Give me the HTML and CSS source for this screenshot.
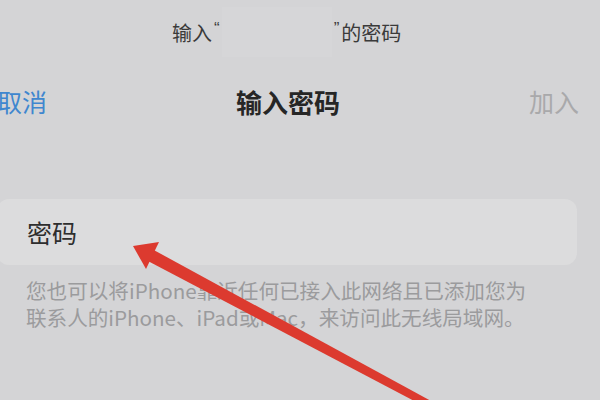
FILE: index.html
```html
<!DOCTYPE html>
<html lang="zh-CN">
<head>
<meta charset="utf-8">
<link rel="stylesheet" href="styles.css">
</head>
<body>
<div class="screen">
  <div class="top">
    <span>输入</span><span class="q">“</span><span class="blank"></span><span class="q">”</span><span>的密码</span>
  </div>
  <div class="nav">
    <span class="cancel">取消</span>
    <span class="title">输入密码</span>
    <span class="join">加入</span>
  </div>
  <div class="card">
    <span class="label">密码</span>
  </div>
  <p class="note">您也可以将iPhone靠近任何已接入此网络且已添加您为<br>联系人的iPhone、iPad或Mac，来访问此无线局域网。</p>
  <svg class="arrow" width="600" height="400" viewBox="0 0 600 400">
    <polygon points="145,259.5 151,248.5 443,407.5 439,414" fill="#dc3a2f"/>
    <polygon points="133,246 159,242 146,269" fill="#dc3a2f"/>
  </svg>
</div>
</body>
</html>
```
FILE: styles.css
```css
html, body {
  margin: 0;
  padding: 0;
}
body {
  background: #d4d4d6;
  font-family: "Noto Sans CJK SC", "Noto Sans", sans-serif;
}
.screen {
  position: relative;
  width: 600px;
  height: 400px;
  overflow: hidden;
  background: #d4d4d6;
}
.top {
  height: 64px;
  display: flex;
  align-items: center;
  padding-left: 172px;
  font-size: 20px;
  color: #3a3a3a;
}
.top .q {
  font-family: "Liberation Sans", sans-serif;
  font-size: 17px;
  padding: 0 2px;
  align-self: flex-start;
  margin-top: 19px;
}
.top .blank {
  width: 110px;
  height: 50px;
  background: #d6d6d8;
}
.nav {
  height: 74px;
  display: flex;
  align-items: center;
  justify-content: space-between;
  font-size: 25px;
}
.cancel {
  color: #3f87cf;
  margin-left: -3px;
  width: 120px;
}
.title {
  color: #262626;
  font-weight: bold;
  font-size: 26px;
}
.join {
  color: #a9a9ab;
  width: 120px;
  text-align: right;
  margin-right: 21px;
}
.card {
  margin-top: 61px;
  margin-left: -3px;
  width: 580px;
  height: 66px;
  box-sizing: border-box;
  border-radius: 12px;
  background: #dcdcdd;
  display: flex;
  align-items: center;
  padding-left: 30px;
  font-size: 25px;
  color: #2e2e2e;
}
.note {
  margin: 12px 0 0;
  padding-left: 26px;
  font-size: 20.6px;
  line-height: 27px;
  color: #9b9b9d;
  white-space: nowrap;
}
.arrow {
  position: absolute;
  left: 0;
  top: 0;
}
```
